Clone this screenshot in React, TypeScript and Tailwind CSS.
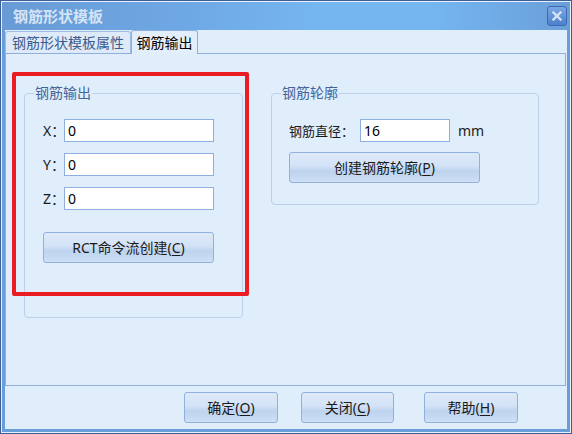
import React from "react";

function Btn({ children, className }: { children: React.ReactNode; className: string }) {
  return (
    <div
      className={`flex items-center justify-center h-[31px] rounded-[3px] border border-[#90b1de] bg-[linear-gradient(to_bottom,#dde9f9_0%,#d3e3f7_45%,#bed3ee_62%,#c6daf2_85%,#d0e0f5_100%)] text-[14px] leading-[18px] text-[#1a1a1a] ${className}`}
    >
      {children}
    </div>
  );
}

function Field({ value, className }: { value: string; className: string }) {
  return (
    <input
      readOnly
      value={value}
      className={`h-[23px] border border-[#8fb0de] bg-white pl-[3px] text-[14px] leading-[21px] text-black outline-none ${className}`}
    />
  );
}

function Group({
  title,
  className,
  children,
}: {
  title: string;
  className: string;
  children: React.ReactNode;
}) {
  return (
    <div className={`relative rounded-[4px] border border-[#bcd0ea] ${className}`}>
      <span className="absolute left-[9px] top-[-10px] bg-[#e0edfb] px-[1px] text-[14px] leading-[18px] text-[#44659a]">
        {title}
      </span>
      {children}
    </div>
  );
}

export default function App() {
  return (
    <div className="relative w-[572px] h-[434px] border border-[#3d5e97] font-['Noto_Sans','Noto_Sans_CJK_SC',sans-serif] select-none">
      <div className="flex h-full flex-col border border-[#e8f0fb] bg-[#6a9ed8]">
        {/* title bar */}
        <div className="flex h-[28px] items-start justify-between bg-[linear-gradient(to_right,#689bd6_0%,#6ea7e3_30%,#75b5f0_55%,#75b6f1_75%,#6a9fd9_100%)]">
          <span className="pl-[11px] pt-[4px] text-[15px] font-bold leading-[20px] text-[#d4e3f5]">
            钢筋形状模板
          </span>
          <div className="mr-[3px] mt-[4px] flex h-[20px] w-[20px] items-center justify-center rounded-[3px] border border-[#3d6ab3] bg-[linear-gradient(to_bottom,#7aa8e4,#4d7fcd)]">
            <svg width="10" height="10" viewBox="0 0 10 10">
              <path d="M1.5 1.5 L8.5 8.5 M8.5 1.5 L1.5 8.5" stroke="#d3e2f5" strokeWidth="2.4" strokeLinecap="square" />
            </svg>
          </div>
        </div>

        {/* client */}
        <div className="mx-[3px] mb-[3px] flex flex-1 flex-col bg-[#e0edfb]">
          {/* tabs */}
          <div className="flex h-[23px] items-end">
            <div className="flex h-[22px] w-[126px] items-center justify-center rounded-t-[3px] border border-b-0 border-[#9ebbe2] bg-[#dfeaf8] text-[14px] leading-[18px] text-[#3b5b8c]">
              钢筋形状模板属性
            </div>
            <div className="relative z-10 -mb-px flex h-[24px] w-[67px] items-center justify-center rounded-t-[3px] border border-b-0 border-[#8fb0de] bg-[#e3eefc] text-[14px] leading-[18px] text-black">
              钢筋输出
            </div>
          </div>

          {/* tab page */}
          <div className="mr-[1px] flex h-[333px] items-start border border-[#8fb0de] bg-[#e0edfb] pl-[18px] pt-[39px]">
            <Group title="钢筋输出" className="h-[225px] w-[219px] pl-[18px] pt-[25px]">
              <div className="flex flex-col gap-[11px]">
                {["X", "Y", "Z"].map((a) => (
                  <div key={a} className="flex items-center">
                    <span className="w-[21px] text-[14px] leading-[18px] text-[#1a1a1a]">{a}：</span>
                    <Field value="0" className="w-[150px]" />
                  </div>
                ))}
              </div>
              <Btn className="mt-[22px] w-[171px]">
                <span>
                  RCT命令流创建(<span className="underline underline-offset-2">C</span>)
                </span>
              </Btn>
            </Group>

            <Group title="钢筋轮廓" className="ml-[28px] h-[112px] w-[268px] pl-[17px] pt-[25px]">
              <div className="flex items-center">
                <span className="w-[71px] text-[13px] leading-[18px] text-[#1a1a1a]">钢筋直径：</span>
                <Field value="16" className="w-[90px]" />
                <span className="ml-[8px] text-[14px] leading-[18px] text-[#1a1a1a]">mm</span>
              </div>
              <Btn className="mt-[10px] w-[191px]">
                <span>
                  创建钢筋轮廓(<span className="underline underline-offset-2">P</span>)
                </span>
              </Btn>
            </Group>
          </div>

          {/* bottom buttons */}
          <div className="mt-[6px] flex">
            <Btn className="ml-[179px] w-[94px]">
              <span>
                确定(<span className="underline underline-offset-2">O</span>)
              </span>
            </Btn>
            <Btn className="ml-[23px] w-[93px]">
              <span>
                关闭(<span className="underline underline-offset-2">C</span>)
              </span>
            </Btn>
            <Btn className="ml-[30px] w-[94px]">
              <span>
                帮助(<span className="underline underline-offset-2">H</span>)
              </span>
            </Btn>
          </div>
        </div>
      </div>

      {/* red annotation */}
      <div className="pointer-events-none absolute left-[11px] top-[71px] h-[224px] w-[237px] rounded-[2px] border-4 border-[#ec1c24]" />
    </div>
  );
}
